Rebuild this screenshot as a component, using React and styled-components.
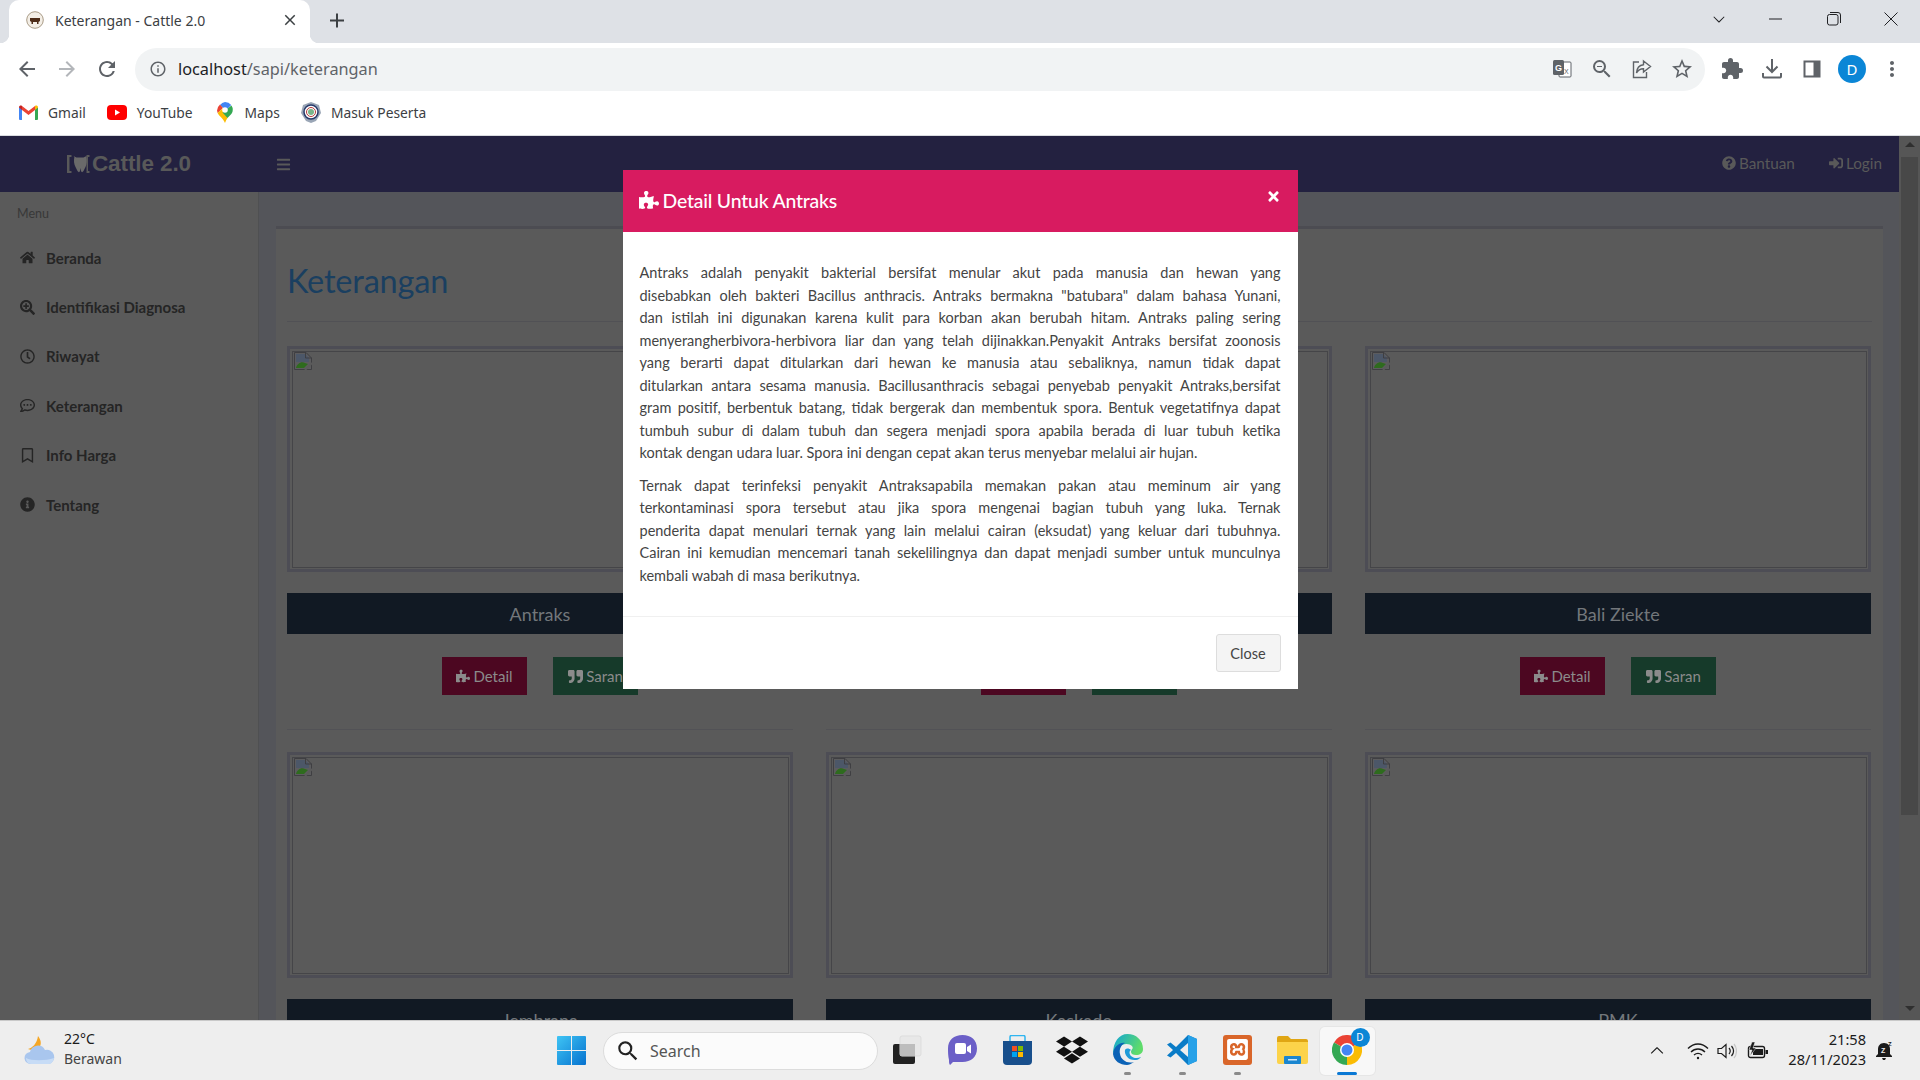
import React from "react";
import styled, { createGlobalStyle } from "styled-components";
import {
  FaHome, FaSearchPlus, FaRegClock, FaRegCommentDots, FaRegBookmark, FaInfoCircle,
  FaPuzzlePiece, FaQuoteRight, FaQuestionCircle, FaSignInAlt, FaBars, FaTimes, FaDropbox,
} from "react-icons/fa";
import {
  MdArrowBack, MdArrowForward, MdRefresh, MdInfoOutline, MdStarBorder, MdExtension,
  MdMoreVert, MdClose, MdAdd, MdSearch, MdZoomOut,
} from "react-icons/md";
import { SiXampp } from "react-icons/si";
import { VscChevronUp, VscChevronDown } from "react-icons/vsc";

const PAGE_FONT = `Lato, "Noto Sans", sans-serif`;
const UI_FONT = `"Noto Sans", "Open Sans", sans-serif`;

const GlobalStyle = createGlobalStyle`
  html, body { margin: 0; padding: 0; height: 100%; overflow: hidden; }
  * { box-sizing: border-box; }
  #root { width: 1920px; height: 1080px; }
`;

const Screen = styled.div`
  width: 1920px;
  height: 1080px;
  display: flex;
  flex-direction: column;
  overflow: hidden;
  background: #fff;
`;

/* ---------- browser chrome ---------- */
const TabStrip = styled.div`
  height: 43px;
  flex: none;
  background: #dee1e6;
  display: flex;
  padding-left: 9px;
  font-family: ${UI_FONT};
`;
const Tab = styled.div`
  position: relative;
  width: 301px;
  height: 43px;
  background: #fff;
  border-radius: 10px 10px 0 0;
  display: flex;
  align-items: center;
  padding: 0 11px 3px 17px;
  color: #3c4043;
  font-size: 14px;
  &::before, &::after {
    content: "";
    position: absolute;
    bottom: 0;
    width: 9px;
    height: 9px;
  }
  &::before { left: -9px; background: radial-gradient(circle at 0 0, #dee1e6 9px, #fff 9.5px); }
  &::after { right: -9px; background: radial-gradient(circle at 100% 0, #dee1e6 9px, #fff 9.5px); }
`;
const TabTitle = styled.span`
  flex: 1;
  margin-left: 11px;
  white-space: nowrap;
`;
const NewTab = styled.div`
  margin-left: 15px;
  width: 24px;
  height: 43px;
  display: flex;
  align-items: center;
  justify-content: center;
  padding-bottom: 2px;
  color: #3c4043;
  font-size: 25px;
`;
const WindowControls = styled.div`
  margin-left: auto;
  display: flex;
  color: #202124;
  padding-bottom: 6px;
`;
const WindowButton = styled.div`
  width: 57.5px;
  height: 37px;
  display: flex;
  align-items: center;
  justify-content: center;
`;

const Toolbar = styled.div`
  height: 52px;
  flex: none;
  display: flex;
  align-items: center;
  padding-left: 7px;
  color: #5f6368;
  background: #fff;
`;
const ToolButton = styled.div`
  width: 40px;
  height: 40px;
  flex: none;
  display: flex;
  align-items: center;
  justify-content: center;
  font-size: ${(p) => p.$size || 24}px;
  color: ${(p) => p.$color || "#5f6368"};
`;
const AddressBar = styled.div`
  width: 1570px;
  height: 43px;
  margin: 0 7px 0 8px;
  border-radius: 22px;
  background: #f1f3f4;
  display: flex;
  align-items: center;
  padding: 0 3px 0 14px;
  font-family: ${UI_FONT};
`;
const Url = styled.div`
  flex: 1;
  margin-left: 11px;
  font-size: 16.3px;
  color: #5f6368;
  b { font-weight: 400; color: #202124; }
`;
const Avatar = styled.div`
  width: 28px;
  height: 28px;
  border-radius: 50%;
  background: #0b86d6;
  color: #fff;
  font: 400 15px ${UI_FONT};
  display: flex;
  align-items: center;
  justify-content: center;
`;

const BookmarkBar = styled.div`
  height: 41px;
  flex: none;
  background: #fff;
  border-bottom: 1px solid #dadce0;
  display: flex;
  align-items: center;
  padding: 0 0 6px 19px;
  font: 400 13.8px ${UI_FONT};
  color: #3c4043;
`;
const Bookmark = styled.div`
  display: flex;
  align-items: center;
  gap: ${(p) => p.$gap || 11}px;
  margin-right: ${(p) => p.$after || 21}px;
  white-space: nowrap;
`;

/* ---------- page ---------- */
const Page = styled.div`
  position: relative;
  flex: 1;
  min-height: 0;
  display: flex;
  overflow: hidden;
  font-family: ${PAGE_FONT};
`;
const Site = styled.div`
  width: 1899px;
  flex: none;
  display: flex;
  flex-direction: column;
`;
const Scrollbar = styled.div`
  flex: 1;
  background: #565656;
  display: flex;
  flex-direction: column;
  align-items: center;
`;
const ScrollArrow = styled.div`
  width: 0;
  height: 5px;
  border-left: 5px solid transparent;
  border-right: 5px solid transparent;
  margin-top: ${(p) => (p.$down ? "auto" : "6px")};
  margin-bottom: ${(p) => (p.$down ? "9px" : "0")};
  ${(p) => (p.$down ? "border-top: 5px solid #2f2f2f;" : "border-bottom: 5px solid #2f2f2f;")}
`;
const ScrollThumb = styled.div`
  width: 17px;
  height: 658px;
  margin-top: 10px;
  background: #484848;
`;

const Navbar = styled.header`
  height: 56px;
  flex: none;
  background: #232140;
  display: flex;
  align-items: center;
  color: #595959;
`;
const Brand = styled.div`
  width: 258px;
  display: flex;
  justify-content: center;
  align-items: center;
  font: 700 22.5px "Liberation Sans", Arial, sans-serif;
  letter-spacing: -0.1px;
`;
const Burger = styled.div`
  margin-left: 18px;
  font-size: 15px;
  display: flex;
`;
const NavLinks = styled.nav`
  margin-left: auto;
  display: flex;
  gap: 34px;
  padding: 0 17px 2px 0;
`;
const NavLink = styled.span`
  display: flex;
  align-items: center;
  gap: 3px;
  font-size: 15.3px;
`;

const Body = styled.div`
  flex: 1;
  min-height: 0;
  display: flex;
`;
const Sidebar = styled.aside`
  width: 259px;
  flex: none;
  background: #5a5a5a;
  border-right: 1px solid #4f5052;
`;
const MenuLabel = styled.div`
  height: 42px;
  padding-left: 17px;
  display: flex;
  align-items: center;
  font-size: 12.5px;
  color: #383838;
`;
const MenuItem = styled.div`
  height: 49.4px;
  padding: 0 0 2px 20px;
  display: flex;
  align-items: center;
  font-size: 15px;
  font-weight: 700;
  color: #252525;
  svg { width: 15px; font-size: 15px; margin-right: 11px; flex: none; }
`;

const Wrapper = styled.main`
  flex: 1;
  min-width: 0;
  background: #54555a;
  padding: 34px 16px 0 17px;
`;
const Box = styled.section`
  background: #5a5a5a;
  border-top: 3px solid #4c4c52;
  padding: 0 11px;
`;
const BoxHeader = styled.div`
  height: 93px;
  padding-top: 34px;
  border-bottom: 1px solid #515155;
  margin-bottom: 24px;
`;
const Heading = styled.h1`
  margin: 0;
  font-size: 32.5px;
  line-height: 36px;
  font-weight: 400;
  color: #1a3f60;
  letter-spacing: -0.2px;
`;
const CardGrid = styled.div`
  display: grid;
  grid-template-columns: repeat(3, 506px);
  column-gap: 33px;
`;
const Card = styled.article`
  display: flex;
  flex-direction: column;
`;
const Frame = styled.div`
  height: 226px;
  border: 3px solid #4d4d55;
  padding: 1.5px;
  margin-bottom: 21px;
`;
const BrokenImage = styled.div`
  height: 100%;
  border: 1px solid #454548;
  padding-left: 1px;
`;
const TitleBar = styled.div`
  height: 41px;
  background: #111923;
  color: #73777b;
  font-size: 18px;
  display: flex;
  align-items: center;
  justify-content: center;
  margin-bottom: 23px;
`;
const Actions = styled.div`
  display: flex;
  justify-content: center;
  gap: 26px;
  padding-bottom: 34px;
  margin-bottom: 22px;
  border-bottom: 1px solid #525256;
`;
const ActionButton = styled.button`
  width: 85px;
  height: 38px;
  border: 0;
  padding: 0;
  background: ${(p) => p.$bg};
  color: #8b8b8b;
  font: 400 15px ${PAGE_FONT};
  display: flex;
  align-items: center;
  justify-content: center;
  gap: 3px;
`;

/* ---------- modal ---------- */
const ModalLayer = styled.div`
  position: absolute;
  inset: 0;
  display: flex;
  justify-content: center;
  align-items: flex-start;
  padding-top: 34px;
`;
const Modal = styled.div`
  width: 675px;
  background: #fff;
  color: #444;
`;
const ModalHeader = styled.div`
  height: 62px;
  background: #d81b60;
  color: #fff;
  display: flex;
  align-items: center;
  padding: 0 16px 2px;
  position: relative;
  font-size: 19.4px;
  font-weight: 500;
  gap: 4px;
  letter-spacing: -0.2px;
`;
const CloseX = styled.span`
  position: absolute;
  right: 17px;
  top: 19px;
  display: flex;
  font-size: 15px;
`;
const ModalBody = styled.div`
  padding: 30px 17px 29px;
  font-size: 14.5px;
  line-height: 22.5px;
`;
const Paragraph = styled.p`
  margin: 0 0 10px;
  &:last-child { margin: 0; }
`;
const Line = styled.span`
  display: block;
  text-align: justify;
  text-align-last: ${(p) => (p.$last ? "left" : "justify")};
`;
const ModalFooter = styled.div`
  border-top: 1px solid #f0f0f0;
  padding: 17px;
  display: flex;
  justify-content: flex-end;
`;
const CloseButton = styled.button`
  width: 65px;
  height: 38px;
  background: #f4f4f4;
  border: 1px solid #ddd;
  border-radius: 3px;
  color: #444;
  font: 400 14.5px ${PAGE_FONT};
`;

/* ---------- taskbar ---------- */
const Taskbar = styled.footer`
  height: 60px;
  flex: none;
  background: #eeeeee;
  border-top: 1px solid #c9c9c9;
  display: flex;
  align-items: center;
  font-family: ${UI_FONT};
  color: #1b1b1b;
`;
const Weather = styled.div`
  width: 557px;
  flex: none;
  padding-left: 24px;
  display: flex;
  align-items: center;
  gap: 8px;
`;
const Stacked = styled.div`
  font-size: ${(p) => p.$size || 14}px;
  line-height: 20px;
  padding-bottom: 3px;
  text-align: ${(p) => p.$align || "left"};
  span { display: block; }
`;
const Muted = styled.span`
  color: #444;
`;
const SearchPill = styled.div`
  width: 275px;
  height: 38px;
  margin-left: 17px;
  border-radius: 19px;
  background: #fbfbfb;
  border: 1px solid #dcdcdc;
  display: flex;
  align-items: center;
  padding-left: 11px;
  gap: 9px;
  font-size: 16px;
  color: #555;
`;
const Dock = styled.div`
  display: flex;
  margin-left: 1.5px;
`;
const DockItem = styled.div`
  position: relative;
  width: 55px;
  height: 48px;
  display: flex;
  align-items: center;
  justify-content: center;
  padding-bottom: 2px;
  ${(p) => p.$active && "background: #f8f8f8; border-radius: 5px; box-shadow: 0 0 0 1px #e6e6e6;"}
  &::after {
    content: "";
    display: ${(p) => (p.$dot || p.$active ? "block" : "none")};
    position: absolute;
    bottom: 0;
    left: 50%;
    height: 3px;
    border-radius: 2px;
    width: ${(p) => (p.$active ? 20 : 7)}px;
    margin-left: ${(p) => (p.$active ? -10 : -3.5)}px;
    background: ${(p) => (p.$active ? "#0a78d4" : "#8a8a8a")};
  }
`;
const XamppTile = styled.span`
  display: flex;
  width: 29px;
  height: 30px;
  background: #d9662a;
  border-radius: 3px;
  align-items: center;
  justify-content: center;
  color: #fff;
  font-size: 21px;
`;
const Tray = styled.div`
  margin-left: auto;
  display: flex;
  align-items: center;
  padding-right: 26px;
  color: #1b1b1b;
`;
const TrayIcon = styled.div`
  display: flex;
  margin-right: ${(p) => p.$after || 0}px;
  margin-left: ${(p) => p.$before || 0}px;
`;
const Badge = styled.span`
  position: absolute;
  top: 1px;
  right: 5px;
  width: 19px;
  height: 19px;
  border-radius: 50%;
  background: #0b86d6;
  color: #fff;
  font-size: 10px;
  display: flex;
  align-items: center;
  justify-content: center;
`;

/* ---------- drawings ---------- */
const Favicon = () => (
  <svg width="18" height="18" viewBox="0 0 18 18">
    <circle cx="9" cy="9" r="8.3" fill="#f3eee6" stroke="#a99b86" />
    <path d="M4 7h10v3l-1.5 1v2h-1.5v-2H7v2H5.5v-2L4 10z" fill="#4d2c18" />
  </svg>
);
const Gmail = () => (
  <svg width="19" height="15" viewBox="0 0 19 15">
    <path d="M0 2l3 2v11H1a1 1 0 0 1-1-1z" fill="#4285f4" />
    <path d="M19 2l-3 2v11h2a1 1 0 0 0 1-1z" fill="#34a853" />
    <path d="M16 1v4l-6.500 5L3 5V1l6.500 5z" fill="#ea4335" />
    <path d="M0 2.500C0 .5 2 0 3 1v4L0 2.500z" fill="#c5221f" />
    <path d="M16 1c1-1 3-.5 3 1.500L16 5z" fill="#fbbc04" />
  </svg>
);
const YouTube = () => (
  <svg width="20" height="15" viewBox="0 0 20 15">
    <rect width="20" height="15" rx="4" fill="#f00" />
    <path d="M8 4.500v6l5-3z" fill="#fff" />
  </svg>
);
const Maps = () => (
  <svg width="16" height="21" viewBox="0 0 16 21">
    <path d="M8 0a8 8 0 0 1 6.200 2.900L9 8.500 3 3A8 8 0 0 1 8 0z" fill="#4285f4" />
    <path d="M3 2.500A8 8 0 0 0 .6 11L6 6z" fill="#ea4335" />
    <path d="M.6 11C2 14 6 16 8 21c.7-2 1.500-3.500 2.500-5L9.500 9 6 6z" fill="#fbbc04" />
    <path d="M14.500 3.500A8 8 0 0 1 15 11c-1 2-3 3-4.500 5L5.500 10.500z" fill="#34a853" />
    <circle cx="8" cy="8" r="2.800" fill="#fff" />
  </svg>
);
const Peserta = () => (
  <svg width="20" height="21" viewBox="0 0 20 21">
    <path d="M10 0l8 3 2 8-5 8-5 2-5-2-5-8 2-8z" fill="#9aa6b6" />
    <circle cx="10" cy="10" r="7" fill="#fff" stroke="#273a6b" strokeWidth="1.500" />
    <circle cx="10" cy="10" r="4.500" fill="#fff" stroke="#b23a3a" />
    <circle cx="10" cy="10" r="3" fill="#79b58a" />
  </svg>
);
const Translate = () => (
  <svg width="20" height="20" viewBox="0 0 20 20">
    <rect x="7" y="3" width="12" height="15" rx="1" fill="#fff" stroke="#5f6368" />
    <rect x="1" y="1" width="11" height="15" rx="1.500" fill="#5f6368" />
    <text x="3" y="12" fontSize="9" fontWeight="700" fill="#fff" fontFamily="Liberation Sans">G</text>
    <text x="12" y="15" fontSize="7" fill="#5f6368" fontFamily="Liberation Sans">X</text>
  </svg>
);
const Share = () => (
  <svg width="20" height="20" viewBox="0 0 20 20" fill="none" stroke="#5f6368" strokeWidth="1.400">
    <path d="M7 3H1.500v15.500h13V13" />
    <path d="M11.500 2l7 5.500-7 5.500V9.800C8 9.800 6 11 4.500 14c.3-5 3-8 7-8.300z" />
  </svg>
);
const Download = () => (
  <svg width="20" height="20" viewBox="0 0 20 20" fill="none" stroke="#5f6368" strokeWidth="2">
    <path d="M10 0v12M4.500 7.500L10 13l5.500-5.500" />
    <path d="M1 14v3.500c0 .5.500 1 1 1h16c.5 0 1-.5 1-1V14" />
  </svg>
);
const SidePanel = () => (
  <svg width="18" height="18" viewBox="0 0 18 18">
    <rect x="0.500" y="0.500" width="17" height="17" fill="#5f6368" />
    <rect x="2.500" y="2.500" width="8" height="13" fill="#fff" />
  </svg>
);
const Restore = () => (
  <svg width="14" height="14" viewBox="0 0 14 14" fill="none" stroke="#202124" strokeWidth="1">
    <rect x="0.500" y="2.500" width="10.500" height="10.500" rx="2" />
    <path d="M3 .5h8a2.500 2.500 0 0 1 2.500 2.500v8" />
  </svg>
);
const Minimize = () => (
  <svg width="14" height="14" viewBox="0 0 14 14"><path d="M0 7h13" stroke="#202124" /></svg>
);
const CloseWindow = () => (
  <svg width="14" height="14" viewBox="0 0 14 14"><path d="M.5.500l13 13M13.500.500l-13 13" stroke="#202124" /></svg>
);
const LogoMark = () => (
  <svg width="25" height="20" viewBox="0 0 25 20" fill="#595959">
    <path d="M0 1h4.500v2H2.500v14h2v2H0z" />
    <path d="M6.500 2l3 1.500h7l3-1.500c1 5 .5 8-1 11l-2 4c-1 1.500-2 1.500-2.500 0l-.5-3-.5 3c-.5 1.500-1.500 1.500-2.500 0l-2-4c-1.500-3-2-6-1-11z" fill="#6a6a6a" />
    <path d="M19.500 1h3v2h-1.500v14h1.500v2h-3z" />
  </svg>
);
const BrokenIcon = () => (
  <svg width="18" height="18" viewBox="0 0 18 18">
    <path d="M.5.500h11.500l5.500 5.500v11.500H.5z" fill="#5c5c5e" stroke="#3f3f42" />
    <path d="M2 2h9l4 4v4H2z" fill="#4c5768" />
    <path d="M2 16c1-4 5-7 9-5l3 1-4 4H2z" fill="#2e6b1e" />
    <path d="M11 18l7-7" stroke="#5a5a5a" strokeWidth="2" />
    <path d="M11.500.500v5.500h6" fill="none" stroke="#3f3f42" />
  </svg>
);
const WeatherIcon = () => (
  <svg width="32" height="30" viewBox="0 0 32 30">
    <path d="M14 0c3 4 4 8 1 12-2 2-7 3-11 1 4-1 9-5 10-13z" fill="#f5a623" />
    <path d="M7 28a6 6 0 0 1-1-12 8 8 0 0 1 15-2 7 7 0 0 1 4 14z" fill="#a9c6ee" />
    <path d="M2 22c5 3 20 3 28 0-1 4-3 6-5 6H7c-3 0-5-3-5-6z" fill="#c7dcf6" />
  </svg>
);
const WinLogo = () => (
  <svg width="29" height="29" viewBox="0 0 29 29">
    <defs>
      <linearGradient id="win" x1="0" y1="0" x2="1" y2="1">
        <stop offset="0" stopColor="#3fc4f4" />
        <stop offset="1" stopColor="#0672cf" />
      </linearGradient>
    </defs>
    <path d="M0 1a1 1 0 0 1 1-1h13v14H0zM15 0h13a1 1 0 0 1 1 1v13H15zM0 15h14v14H1a1 1 0 0 1-1-1zM15 15h14v13a1 1 0 0 1-1 1H15z" fill="url(#win)" />
  </svg>
);
const TaskView = () => (
  <svg width="30" height="30" viewBox="0 0 30 30">
    <rect x="1" y="9" width="22" height="20" rx="2" fill="#222" />
    <rect x="8" y="1" width="21" height="20" rx="2" fill="#e8e8e8" stroke="#ddd" />
    <rect x="8" y="9" width="15" height="12" fill="#bdbdbd" />
  </svg>
);
const ChatIcon = () => (
  <svg width="29" height="30" viewBox="0 0 29 30">
    <path d="M14.500 0C23 0 29 5 29 13.500S23 27 14.500 27H5l-3 3c-1-1-1-3-1-5C0 21 0 17 0 13.500 0 5 6 0 14.500 0z" fill="#6b5fc7" />
    <rect x="7" y="8" width="11" height="11" rx="2" fill="#fff" />
    <path d="M19 12l4-2.500v9L19 16z" fill="#fff" />
  </svg>
);
const StoreIcon = () => (
  <svg width="29" height="30" viewBox="0 0 29 30">
    <path d="M7 6V2a1.500 1.500 0 0 1 1.500-1.500h12A1.500 1.500 0 0 1 22 2v4" fill="none" stroke="#2fb5f0" strokeWidth="1.500" />
    <path d="M0 6h29v20a4 4 0 0 1-4 4H4a4 4 0 0 1-4-4z" fill="#184f8c" />
    <rect x="9" y="11" width="5" height="5" fill="#f25022" />
    <rect x="15" y="11" width="5" height="5" fill="#7fba00" />
    <rect x="9" y="17" width="5" height="5" fill="#00a4ef" />
    <rect x="15" y="17" width="5" height="5" fill="#ffb900" />
  </svg>
);
const EdgeIcon = () => (
  <svg width="31" height="31" viewBox="0 0 31 31">
    <defs>
      <linearGradient id="edgeA" x1="0" y1="0" x2="1" y2="0.400">
        <stop offset="0" stopColor="#0fa4d8" />
        <stop offset="1" stopColor="#5fdc6a" />
      </linearGradient>
    </defs>
    <path d="M15.500 0C24 0 31 6 31 15c0 4-3 6-7 6-3 0-5-1-5-3 0-3 3-3 1-6-2-2-6-3-10-1-5 2-8 7-9 9C1 8 7 0 15.500 0z" fill="url(#edgeA)" />
    <path d="M1 20C2 12 8 8 13 9c-4 2-6 6-5 11 1 6 7 10 14 8-3 2-5 3-7 3C8 31 2 27 1 20z" fill="#0b62b6" />
    <path d="M13 16c-1 5 4 11 11 10 2 0 4-2 5-3-4 2-8 1-10-1-2-2-2-5 0-6-2-2-5-2-6 0z" fill="#1e9bd8" />
  </svg>
);
const VsCodeIcon = () => (
  <svg width="30" height="30" viewBox="0 0 30 30">
    <path d="M21 0l9 4v22l-9 4L9 18l-5.500 4.500L0 20.500 6 15 0 9.500l3.500-2L9 12z" fill="#0a7cc7" />
    <path d="M21 0l9 4v22l-9 4z" fill="#27a1e8" />
    <path d="M21 8l-8 7 8 7z" fill="#eeeeee" />
  </svg>
);
const FolderIcon = () => (
  <svg width="31" height="28" viewBox="0 0 31 28">
    <path d="M0 2a2 2 0 0 1 2-2h9l3 3h15a2 2 0 0 1 2 2v3H0z" fill="#e0a614" />
    <path d="M0 6h31v20a2 2 0 0 1-2 2H2a2 2 0 0 1-2-2z" fill="#fcd34a" />
    <rect x="7" y="20" width="17" height="8" rx="1" fill="#1a86d0" />
    <rect x="11" y="23" width="9" height="1.500" fill="#cfe8f8" />
  </svg>
);
const ChromeIcon = () => (
  <svg width="30" height="30" viewBox="0 0 30 30">
    <path d="M15 15L2 7.500A15 15 0 0 1 28 7.500z" fill="#ea4335" />
    <path d="M15 15L2 7.500A15 15 0 0 0 15 30z" fill="#34a853" />
    <path d="M15 15L28 7.500A15 15 0 0 1 15 30z" fill="#fbbc04" />
    <circle cx="15" cy="15" r="7" fill="#fff" />
    <circle cx="15" cy="15" r="5.500" fill="#4285f4" />
  </svg>
);
const Wifi = () => (
  <svg width="22" height="18" viewBox="0 0 22 18" fill="none" stroke="#1b1b1b" strokeWidth="1.400">
    <path d="M1 6.500c6-6 14-6 20 0M4 10c4-4 10-4 14 0M7 13c2.500-2 5.500-2 8 0" />
    <circle cx="11" cy="16" r="1.200" fill="#1b1b1b" stroke="none" />
  </svg>
);
const Speaker = () => (
  <svg width="20" height="18" viewBox="0 0 20 18" fill="none" stroke="#1b1b1b" strokeWidth="1.200">
    <path d="M1 6.500h3.500L9 2.500v13l-4.500-4H1z" />
    <path d="M12 6c1.500 1.800 1.500 4.200 0 6M14.500 4c2.500 3 2.500 7 0 10" />
    <path d="M17 2c3.300 4 3.300 10 0 14" stroke="#c8c8c8" />
  </svg>
);
const Battery = () => (
  <svg width="22" height="18" viewBox="0 0 22 18">
    <rect x="1.500" y="4.500" width="16" height="11" rx="2" fill="none" stroke="#1b1b1b" strokeWidth="1.400" />
    <rect x="6" y="7" width="10" height="6" fill="#1b1b1b" />
    <rect x="18.500" y="8" width="2.500" height="4" fill="#1b1b1b" />
    <path d="M5 0L2 8h3l-2 6 6-8H6l2-6z" fill="#1b1b1b" stroke="#eee" strokeWidth="0.500" />
  </svg>
);
const BellSleep = () => (
  <svg width="18" height="20" viewBox="0 0 18 20">
    <path d="M8 2c4 0 6 3 6 6v5l2 2v1H0v-1l2-2V8c0-3 2-6 6-6z" fill="#1b1b1b" />
    <path d="M6 17h4l-1 2H7z" fill="#1b1b1b" />
    <text x="5" y="12" fontSize="7" fontWeight="700" fill="#eee" fontFamily="Liberation Sans">Z</text>
    <text x="12" y="5" fontSize="6" fontWeight="700" fill="#1b1b1b" fontFamily="Liberation Sans">Z</text>
  </svg>
);

const menu = [
  { label: "Beranda", Icon: FaHome },
  { label: "Identifikasi Diagnosa", Icon: FaSearchPlus },
  { label: "Riwayat", Icon: FaRegClock },
  { label: "Keterangan", Icon: FaRegCommentDots },
  { label: "Info Harga", Icon: FaRegBookmark },
  { label: "Tentang", Icon: FaInfoCircle },
];

const diseases = ["Antraks", "", "Bali Ziekte", "Jembrana", "Kaskado", "PMK"];

const paragraphs = [
  [
    "Antraks adalah penyakit bakterial bersifat menular akut pada manusia dan hewan yang",
    'disebabkan oleh bakteri Bacillus anthracis. Antraks bermakna "batubara" dalam bahasa Yunani,',
    "dan istilah ini digunakan karena kulit para korban akan berubah hitam. Antraks paling sering",
    "menyerangherbivora-herbivora liar dan yang telah dijinakkan.Penyakit Antraks bersifat zoonosis",
    "yang berarti dapat ditularkan dari hewan ke manusia atau sebaliknya, namun tidak dapat",
    "ditularkan antara sesama manusia. Bacillusanthracis sebagai penyebab penyakit Antraks,bersifat",
    "gram positif, berbentuk batang, tidak bergerak dan membentuk spora. Bentuk vegetatifnya dapat",
    "tumbuh subur di dalam tubuh dan segera menjadi spora apabila berada di luar tubuh ketika",
    "kontak dengan udara luar. Spora ini dengan cepat akan terus menyebar melalui air hujan.",
  ],
  [
    "Ternak dapat terinfeksi penyakit Antraksapabila memakan pakan atau meminum air yang",
    "terkontaminasi spora tersebut atau jika spora mengenai bagian tubuh yang luka. Ternak",
    "penderita dapat menulari ternak yang lain melalui cairan (eksudat) yang keluar dari tubuhnya.",
    "Cairan ini kemudian mencemari tanah sekelilingnya dan dapat menjadi sumber untuk munculnya",
    "kembali wabah di masa berikutnya.",
  ],
];

export default function App() {
  return (
    <Screen>
      <GlobalStyle />
      <TabStrip>
        <Tab>
          <Favicon />
          <TabTitle>Keterangan - Cattle 2.0</TabTitle>
          <MdClose size={18} color="#3c4043" />
        </Tab>
        <NewTab><MdAdd /></NewTab>
        <WindowControls>
          <WindowButton><VscChevronDown size={18} /></WindowButton>
          <WindowButton><Minimize /></WindowButton>
          <WindowButton><Restore /></WindowButton>
          <WindowButton><CloseWindow /></WindowButton>
        </WindowControls>
      </TabStrip>

      <Toolbar>
        <ToolButton><MdArrowBack /></ToolButton>
        <ToolButton $color="#b3b6ba"><MdArrowForward /></ToolButton>
        <ToolButton><MdRefresh /></ToolButton>
        <AddressBar>
          <MdInfoOutline size={18} color="#5f6368" />
          <Url><b>localhost</b>/sapi/keterangan</Url>
          <ToolButton><Translate /></ToolButton>
          <ToolButton><MdZoomOut /></ToolButton>
          <ToolButton><Share /></ToolButton>
          <ToolButton><MdStarBorder /></ToolButton>
        </AddressBar>
        <ToolButton><MdExtension /></ToolButton>
        <ToolButton><Download /></ToolButton>
        <ToolButton><SidePanel /></ToolButton>
        <ToolButton><Avatar>D</Avatar></ToolButton>
        <ToolButton><MdMoreVert /></ToolButton>
      </Toolbar>

      <BookmarkBar>
        <Bookmark $after={21} $gap={10}><Gmail />Gmail</Bookmark>
        <Bookmark $after={24} $gap={10}><YouTube />YouTube</Bookmark>
        <Bookmark $after={21} $gap={12}><Maps />Maps</Bookmark>
        <Bookmark $gap={10}><Peserta />Masuk Peserta</Bookmark>
      </BookmarkBar>

      <Page>
        <Site>
          <Navbar>
            <Brand><LogoMark />Cattle 2.0</Brand>
            <Burger><FaBars /></Burger>
            <NavLinks>
              <NavLink><FaQuestionCircle size={14} />Bantuan</NavLink>
              <NavLink><FaSignInAlt size={14} />Login</NavLink>
            </NavLinks>
          </Navbar>
          <Body>
            <Sidebar>
              <MenuLabel>Menu</MenuLabel>
              {menu.map(({ label, Icon }) => (
                <MenuItem key={label}><Icon />{label}</MenuItem>
              ))}
            </Sidebar>
            <Wrapper>
              <Box>
                <BoxHeader><Heading>Keterangan</Heading></BoxHeader>
                <CardGrid>
                  {diseases.map((name, i) => (
                    <Card key={i}>
                      <Frame><BrokenImage><BrokenIcon /></BrokenImage></Frame>
                      <TitleBar>{name}</TitleBar>
                      <Actions>
                        <ActionButton $bg="#4c0721"><FaPuzzlePiece size={14} />Detail</ActionButton>
                        <ActionButton $bg="#163a2a"><FaQuoteRight size={15} />Saran</ActionButton>
                      </Actions>
                    </Card>
                  ))}
                </CardGrid>
              </Box>
            </Wrapper>
          </Body>
        </Site>
        <Scrollbar>
          <ScrollArrow />
          <ScrollThumb />
          <ScrollArrow $down />
        </Scrollbar>

        <ModalLayer>
          <Modal>
            <ModalHeader>
              <FaPuzzlePiece size={20} />
              Detail Untuk Antraks
              <CloseX><FaTimes /></CloseX>
            </ModalHeader>
            <ModalBody>
              {paragraphs.map((lines, p) => (
                <Paragraph key={p}>
                  {lines.map((line, i) => (
                    <Line key={i} $last={i === lines.length - 1}>{line}</Line>
                  ))}
                </Paragraph>
              ))}
            </ModalBody>
            <ModalFooter><CloseButton>Close</CloseButton></ModalFooter>
          </Modal>
        </ModalLayer>
      </Page>

      <Taskbar>
        <Weather>
          <WeatherIcon />
          <Stacked>
            <span>22°C</span>
            <Muted>Berawan</Muted>
          </Stacked>
        </Weather>
        <WinLogo />
        <SearchPill><MdSearch size={26} color="#222" />Search</SearchPill>
        <Dock>
          <DockItem><TaskView /></DockItem>
          <DockItem><ChatIcon /></DockItem>
          <DockItem><StoreIcon /></DockItem>
          <DockItem><FaDropbox size={32} color="#111" /></DockItem>
          <DockItem $dot><EdgeIcon /></DockItem>
          <DockItem $dot><VsCodeIcon /></DockItem>
          <DockItem $dot><XamppTile><SiXampp /></XamppTile></DockItem>
          <DockItem><FolderIcon /></DockItem>
          <DockItem $active><ChromeIcon /><Badge>D</Badge></DockItem>
        </Dock>
        <Tray>
          <TrayIcon $after={20}><VscChevronUp size={20} /></TrayIcon>
          <TrayIcon $after={8}><Wifi /></TrayIcon>
          <TrayIcon $after={10}><Speaker /></TrayIcon>
          <TrayIcon $after={19}><Battery /></TrayIcon>
          <Stacked $align="right" $size={14.6}>
            <span>21:58</span>
            <span>28/11/2023</span>
          </Stacked>
          <TrayIcon $before={10}><BellSleep /></TrayIcon>
        </Tray>
      </Taskbar>
    </Screen>
  );
}
